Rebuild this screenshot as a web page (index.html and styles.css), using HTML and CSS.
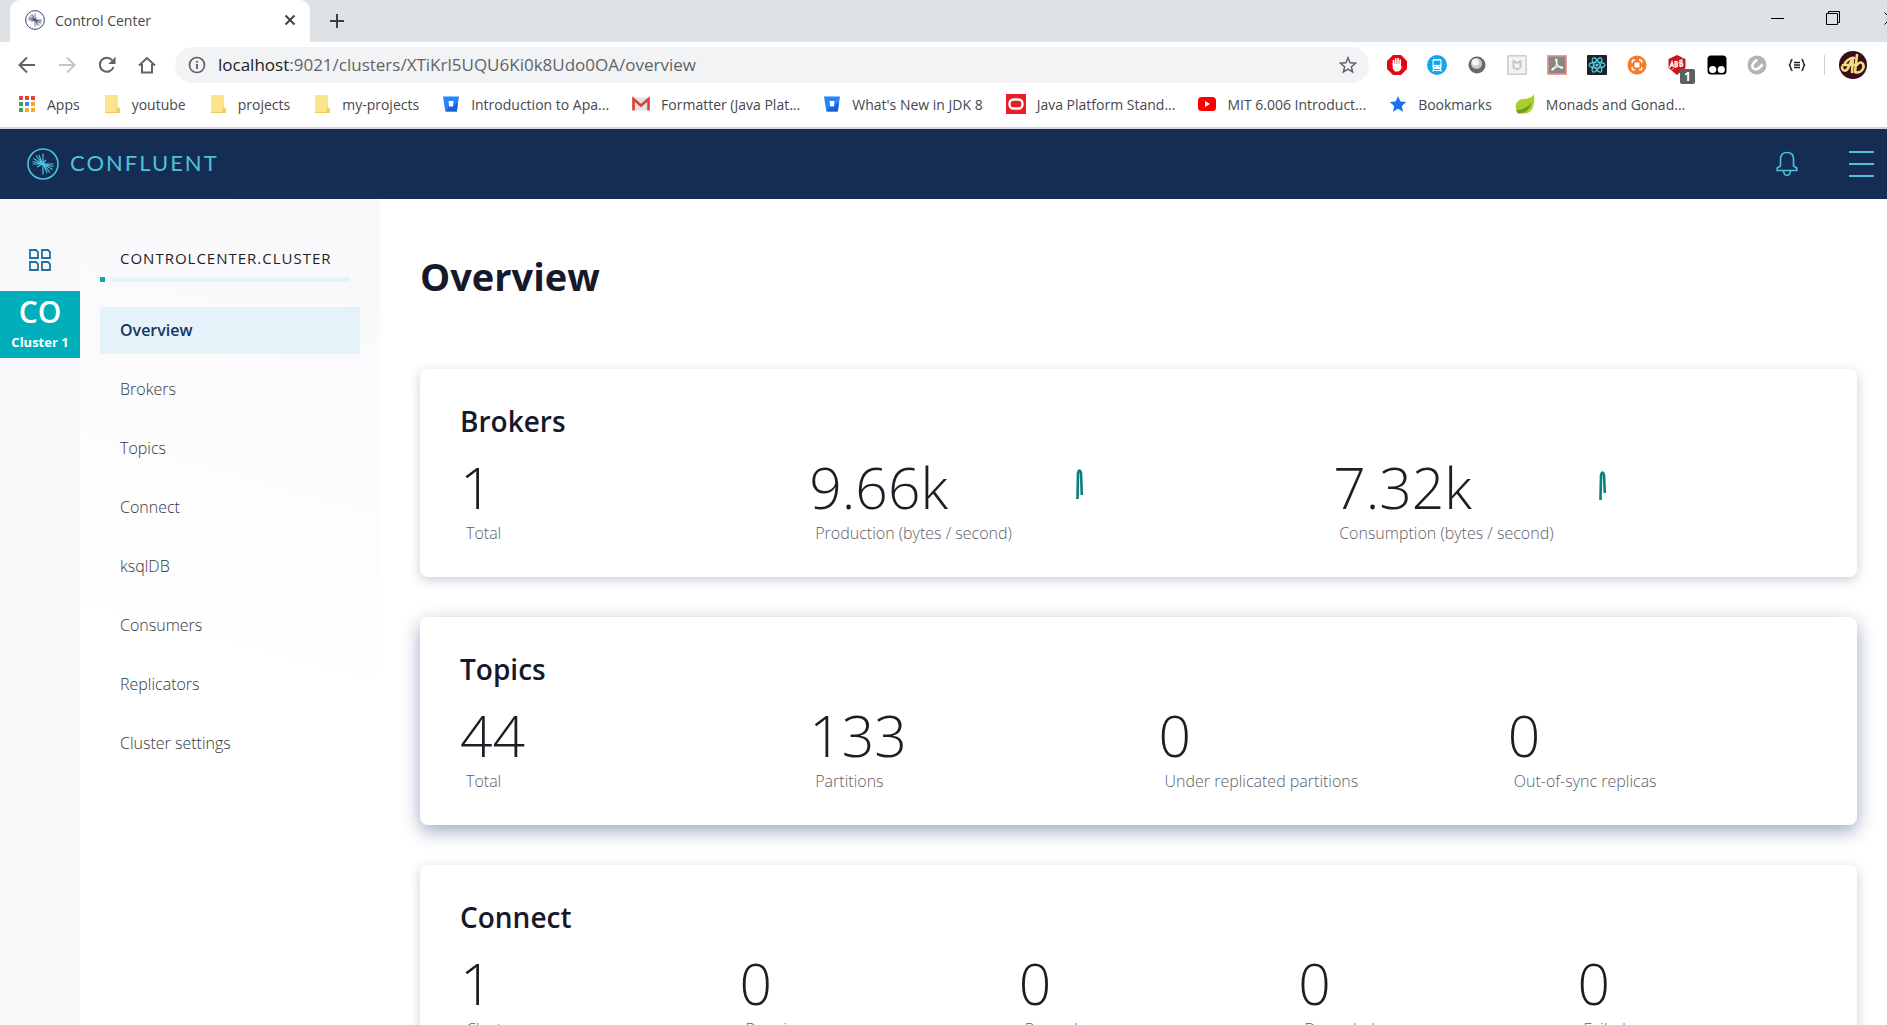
FILE: index.html
```html
<!DOCTYPE html>
<html lang="en">
<head>
<meta charset="utf-8">
<title>Control Center</title>
<link rel="stylesheet" href="styles.css">
</head>
<body>
<svg class="defs" aria-hidden="true">
  <symbol id="burst" viewBox="0 0 32 32">
    <circle cx="16" cy="16" r="15" fill="none" stroke="currentColor" stroke-width="1.6"/>
    <path d="M16 16V5.5M15 15L12 7M14.5 14.5L9 7.5M14 15L6.5 10.5M14 15.5L5.500 13.500M15 16H5.500M16 16V26.500M17 17L20 25M17.500 17.500L23 24.500M18 17L25.500 21.500M18 16.500L26.500 18.500M17 16H26.500M15.500 16L10 19M16 15L19 12" fill="none" stroke="currentColor" stroke-width="1.2"/>
    <path d="M14 13.500L16 14.500L18 15L18 18L16 17.500L14 16.500Z" fill="currentColor"/>
  </symbol>
  <symbol id="folder" viewBox="0 0 18 20">
    <path d="M2 1H15V14L17 15V19H2Z" fill="#fde38c"/>
    <path d="M14 13L17 14V19H13Z" fill="#f6cf57"/>
    <path d="M2 18.500H16" stroke="#efc95a"/>
  </symbol>
  <symbol id="bucket" viewBox="0 0 18 18">
    <path d="M1 1.500H17L14.800 16.500H3.300Z" fill="#2684ff"/>
    <path d="M11 11.500L16 7L14.800 16.500H4L7 11.500Z" fill="#1660d6"/>
    <path d="M6.500 6H11.500L10.800 11.500H7.300Z" fill="#fff"/>
  </symbol>
</svg>

<div class="browser">
  <div class="tabstrip">
    <div class="tab">
      <svg class="tab-icon" width="20" height="20"><use href="#burst"/></svg>
      <span class="tab-title">Control Center</span>
      <button class="icon-btn tab-close" aria-label="Close tab"><svg width="12" height="12" viewBox="0 0 12 12"><path d="M1.500 1.500L10.500 10.500M10.500 1.500L1.500 10.500" stroke="#3c4043" stroke-width="1.900"/></svg></button>
    </div>
    <button class="icon-btn new-tab" aria-label="New tab"><svg width="16" height="16" viewBox="0 0 16 16"><path d="M8 1V15M1 8H15" stroke="#3c4043" stroke-width="2"/></svg></button>
    <div class="window-controls">
      <button class="icon-btn" aria-label="Minimize"><svg width="13" height="13"><path d="M0 6.500H13" stroke="#000"/></svg></button>
      <button class="icon-btn" aria-label="Restore"><svg width="14" height="14" viewBox="0 0 14 14" fill="none" stroke="#000"><path d="M.5 2.500H11.500V13.500H.5ZM2.500 2.500V.5H13.500V11.500H11.500"/></svg></button>
      <button class="icon-btn window-close" aria-label="Close window"><svg width="13" height="13" viewBox="0 0 13 13"><path d="M.5 .5L12.500 12.500M12.500 .5L.5 12.500" stroke="#000"/></svg></button>
    </div>
  </div>

  <div class="toolbar">
    <div class="nav-buttons">
      <button class="icon-btn" aria-label="Back"><svg width="18" height="18" viewBox="0 0 18 18" fill="none" stroke="#5f6368" stroke-width="2"><path d="M17 9H2M9 1.500L1.500 9L9 16.500"/></svg></button>
      <button class="icon-btn" aria-label="Forward"><svg width="18" height="18" viewBox="0 0 18 18" fill="none" stroke="#c4c6c9" stroke-width="2"><path d="M1 9H16M9 1.500L16.500 9L9 16.500"/></svg></button>
      <button class="icon-btn" aria-label="Reload"><svg width="18" height="18" viewBox="0 0 18 18"><path d="M15.500 11A7 7 0 1 1 14 4" fill="none" stroke="#5f6368" stroke-width="2"/><path d="M17.500 .8V8H10.300Z" fill="#5f6368"/></svg></button>
      <button class="icon-btn" aria-label="Home"><svg width="18" height="18" viewBox="0 0 18 18" fill="none" stroke="#5f6368" stroke-width="2"><path d="M1 9.500L9 2L17 9.500M4 8V16.500H14V8"/></svg></button>
    </div>
    <div class="address">
      <svg width="18" height="18" viewBox="0 0 18 18"><circle cx="9" cy="9" r="7.500" fill="none" stroke="#5f6368" stroke-width="1.700"/><path d="M9 8V13M9 5V6.800" stroke="#5f6368" stroke-width="1.900"/></svg>
      <a class="url" href="#"><span class="url-host">localhost</span>:9021/clusters/XTiKrl5UQU6Ki0k8Udo0OA/overview</a>
      <button class="icon-btn star" aria-label="Bookmark this page"><svg width="18" height="18" viewBox="0 0 18 18"><path d="M9 1.800L11.100 6.700L16.500 7.200L12.400 10.800L13.600 16L9 13.200L4.400 16L5.600 10.800L1.500 7.200L6.900 6.700Z" fill="none" stroke="#5f6368" stroke-width="1.500"/></svg></button>
    </div>
    <div class="extensions">
      <button class="icon-btn" aria-label="Ad blocker"><svg width="20" height="20" viewBox="0 0 20 20"><path d="M6 0H14L20 6V14L14 20H6L0 14V6Z" fill="#e30613"/><path d="M6.500 9V5.500M8.700 8V3.800M11 8V3.500M13.200 9V5" stroke="#fff" stroke-width="1.700" stroke-linecap="round"/><path d="M5.700 8.500H14V12L15.500 10.500L13.500 15L11.500 16.500H8L5.700 13.500Z" fill="#fff"/></svg></button>
      <button class="icon-btn" aria-label="Transit"><svg width="20" height="20" viewBox="0 0 20 20"><circle cx="10" cy="10" r="10" fill="#10a7ee"/><rect x="5.500" y="4" width="9" height="10" rx="1.500" fill="#fff"/><path d="M7 6H13V9.500H7ZM7 11.500H8.500M11.500 11.500H13" fill="#10a7ee" stroke="#10a7ee" stroke-width=".8"/><path d="M7 14L5.500 16.500M13 14L14.500 16.500M6.500 15.500H13.500" stroke="#fff" stroke-width="1.200"/></svg></button>
      <button class="icon-btn" aria-label="Orb"><svg width="18" height="18" viewBox="0 0 18 18"><circle cx="9" cy="9" r="8.500" fill="#686868"/><circle cx="8.500" cy="7.500" r="5.500" fill="#c9c9c9"/><circle cx="7.500" cy="6.200" r="3.500" fill="#f7f7f7"/></svg></button>
      <button class="icon-btn" aria-label="Web adviser"><svg width="20" height="20" viewBox="0 0 20 20" fill="none"><rect x=".8" y=".8" width="18.400" height="18.400" rx="1" fill="#f3f3f3" stroke="#c9cbce" stroke-width="1.500"/><path d="M6.500 6L10 8L13.500 6V12.500L10 14.500L6.500 12.500Z" stroke="#c2c4c7" stroke-width="1.800"/></svg></button>
      <button class="icon-btn" aria-label="PDF tools"><svg width="20" height="20" viewBox="0 0 20 20"><rect x=".8" y=".8" width="18.400" height="18.400" fill="#8b8787" stroke="#f19a92" stroke-width="1.500"/><path d="M9 4C10.500 4 10 8 9 10.500C8 13 6 15.500 5 15C4 14 8 12 11 11.700C14 11.500 16 12 15.500 13C14.500 14 11 11.500 9.800 8.500C9 6.500 8.300 4 9 4Z" fill="none" stroke="#fff" stroke-width="1.100"/></svg></button>
      <button class="icon-btn" aria-label="React tools"><svg width="20" height="20" viewBox="0 0 20 20"><rect width="20" height="20" rx="1" fill="#1c232c"/><g fill="none" stroke="#5ccbe8" stroke-width="1.100"><ellipse cx="10" cy="10" rx="8" ry="3"/><ellipse cx="10" cy="10" rx="8" ry="3" transform="rotate(60 10 10)"/><ellipse cx="10" cy="10" rx="8" ry="3" transform="rotate(120 10 10)"/></g><circle cx="10" cy="10" r="1.600" fill="#5ccbe8"/></svg></button>
      <button class="icon-btn" aria-label="Hub"><svg width="20" height="20" viewBox="0 0 20 20"><circle cx="10" cy="10" r="9.500" fill="#f47b2a"/><rect x="7.500" y="7.500" width="5" height="5" fill="#fff"/><path d="M5 8L5.500 5.500L8 5M12 5L14.500 5.500L15 8M15 12L14.500 14.500L12 15M8 15L5.500 14.500L5 12" fill="none" stroke="#fff" stroke-width="1.500"/></svg></button>
      <button class="icon-btn badged" aria-label="Adblock, 1 blocked"><svg width="20" height="20" viewBox="0 0 20 20"><path d="M10 0L18.500 4V13L10 20L1.500 13V4Z" fill="#d0141e"/><path d="M2.500 13L5 7L6.500 12M3.500 10.500H6.500M8 12V6.500C11 5.500 11 9 8 9.200C11.500 9 11.500 12 8 12M13 11.500V5.500C16 5 16 8 13 8.300C17 8 16.500 11 13 11.500" fill="none" stroke="#fff" stroke-width="1.300"/><path d="M4 16L16 3" stroke="#f8c9cc" stroke-width=".8"/></svg><span class="badge">1</span></button>
      <button class="icon-btn" aria-label="Dots"><svg width="20" height="20" viewBox="0 0 20 20"><rect x=".5" y=".5" width="19" height="19" rx="3.500" fill="#000"/><circle cx="5.700" cy="14.500" r="3.600" fill="#fff"/><circle cx="14.300" cy="14.500" r="3.600" fill="#fff"/></svg></button>
      <button class="icon-btn" aria-label="Clip"><svg width="20" height="20" viewBox="0 0 20 20"><circle cx="10" cy="10" r="9.500" fill="#b3b3b3"/><path d="M10 4.500L7 7.500C3 12 8 17 12 13L15.500 9.500" fill="none" stroke="#fff" stroke-width="2.600"/></svg></button>
      <button class="icon-btn" aria-label="JSON viewer"><svg width="18" height="14" viewBox="0 0 18 14" fill="none" stroke="#222" stroke-width="1.500"><path d="M4.500 1.500C2 1.500 3.500 6.500 1 7C3.500 7.500 2 12.500 4.500 12.500M13.500 1.500C16 1.500 14.500 6.500 17 7C14.500 7.500 16 12.500 13.500 12.500M6 4.500H12M6 7H12M6 9.500H12"/></svg></button>
    </div>
    <span class="separator"></span>
    <button class="icon-btn avatar" aria-label="Profile"><svg width="28" height="28" viewBox="0 0 28 28"><circle cx="14" cy="14" r="14" fill="#3a0d1c"/><path d="M3 16C3 21 8 21 10 15L14 6L13 21M4 14H15M6 12C8 9 12 7 15 7M18 4L16 21C22 23 26 17 24 13C22 10 19 12 18 14" fill="none" stroke="#f1dc7c" stroke-width="2.600" stroke-linecap="round"/></svg></button>
  </div>

  <nav class="bookmarks" aria-label="Bookmarks">
    <a href="#"><svg width="18" height="18" viewBox="0 0 18 18"><path d="M1 1H5V5H1ZM7 1H11V5H7ZM13 1H17V5H13Z" fill="#ea4335"/><path d="M1 7H5V11H1ZM1 13H5V17H1Z" fill="#34a853"/><path d="M7 7H11V11H7Z" fill="#4285f4"/><path d="M13 7H17V11H13ZM7 13H11V17H7ZM13 13H17V17H13Z" fill="#f7ab1e"/></svg>Apps</a>
    <a href="#"><svg width="18" height="20"><use href="#folder"/></svg>youtube</a>
    <a href="#"><svg width="18" height="20"><use href="#folder"/></svg>projects</a>
    <a href="#"><svg width="18" height="20"><use href="#folder"/></svg>my-projects</a>
    <a href="#"><svg width="18" height="18"><use href="#bucket"/></svg>Introduction to Apa...</a>
    <a href="#"><svg width="18" height="18" viewBox="0 0 18 18"><rect x="1" y="2.500" width="16" height="13" fill="#e3e3e3"/><path d="M1.500 15.500V4L9 10.500L16.500 4V15.500" fill="none" stroke="#d5423a" stroke-width="2.600"/></svg>Formatter (Java Plat...</a>
    <a href="#"><svg width="18" height="18"><use href="#bucket"/></svg>What's New in JDK 8</a>
    <a href="#"><svg width="20" height="20" viewBox="0 0 20 20"><rect width="20" height="20" fill="#e8202a"/><rect x="3.500" y="5.500" width="13" height="9" rx="4" fill="none" stroke="#fff" stroke-width="2.300"/></svg>Java Platform Stand...</a>
    <a href="#"><svg width="18" height="18" viewBox="0 0 18 18"><rect y="2" width="18" height="14" rx="3.500" fill="#f00"/><path d="M7 6L12 9L7 12Z" fill="#fff"/></svg>MIT 6.006 Introduct...</a>
    <a href="#"><svg width="18" height="18" viewBox="0 0 18 18"><path d="M9 1L11.400 6.400L17.200 7L12.800 10.900L14.100 16.700L9 13.700L3.900 16.700L5.200 10.900L.8 7L6.600 6.400Z" fill="#1a73e8"/></svg>Bookmarks</a>
    <a href="#"><svg width="20" height="20" viewBox="0 0 20 20"><path d="M19 0C20 8 19 20 8 19.500L3 19C-1 14 0 6 8 5C13 4.500 17 4 19 0Z" fill="#a9d02a"/><path d="M1 16C8 16 13 13 17 8C15 16 9 20 3 19.500Z" fill="#6f9d1c"/></svg>Monads and Gonad...</a>
  </nav>
</div>

<header class="app-header">
  <a class="brand" href="#"><svg width="32" height="32"><use href="#burst"/></svg><span>CONFLUENT</span></a>
  <button class="icon-btn" aria-label="Notifications"><svg width="22" height="26" viewBox="0 0 22 26" fill="none" stroke="#4bc3dc" stroke-width="1.600"><path d="M4.500 15V8C4.500 3.500 7 1.500 11 1.500S17.500 3.500 17.500 8V15L20.800 17V19.500H1.200V17ZM7.500 20C8 23.500 9.500 24.500 11 24.500S14 23.500 14.500 20"/></svg></button>
  <button class="icon-btn" aria-label="Menu"><svg width="25" height="26" viewBox="0 0 25 26" stroke="#4bc3dc" stroke-width="2"><path d="M0 1H25M0 13H25M0 25H25"/></svg></button>
</header>

<div class="app">
  <aside class="rail">
    <a class="rail-home" href="#" aria-label="All clusters"><svg width="22" height="22" viewBox="0 0 22 22" fill="none" stroke="#20719c" stroke-width="1.800"><path d="M1 1H7L9 3V9H1ZM13 1H19L21 3V9H13ZM1 13H7L9 15V21H1ZM13 13H19L21 15V21H13Z"/></svg></a>
    <a class="rail-cluster" href="#"><span class="rail-code">CO</span><span class="rail-name">Cluster 1</span></a>
  </aside>

  <aside class="sidebar">
    <div class="cluster-title">CONTROLCENTER.CLUSTER</div>
    <div class="cluster-bar"><span class="bar-dot"></span><span class="bar-line"></span></div>
    <nav class="menu" aria-label="Cluster">
      <a class="active" href="#">Overview</a>
      <a href="#">Brokers</a>
      <a href="#">Topics</a>
      <a href="#">Connect</a>
      <a href="#">ksqlDB</a>
      <a href="#">Consumers</a>
      <a href="#">Replicators</a>
      <a href="#">Cluster settings</a>
    </nav>
  </aside>

  <main class="content">
    <h1>Overview</h1>
    <section class="card">
      <h2>Brokers</h2>
      <div class="metrics metrics-brokers">
        <div class="metric"><div class="value">1</div><div class="label">Total</div></div>
        <div class="metric with-chart">
          <div><div class="value">9.66k</div><div class="label">Production (bytes / second)</div></div>
          <svg width="10" height="60" viewBox="0 0 10 60"><path d="M2.500 45L3 19Q4.500 14 6 19L6.800 41" fill="none" stroke="#08807f" stroke-width="2.600"/></svg>
        </div>
        <div class="metric with-chart">
          <div><div class="value">7.32k</div><div class="label">Consumption (bytes / second)</div></div>
          <svg width="10" height="60" viewBox="0 0 10 60"><path d="M1.500 46L2 21Q3.500 16 5 21L5.800 39" fill="none" stroke="#08807f" stroke-width="2.600"/></svg>
        </div>
      </div>
    </section>
    <section class="card hovered">
      <h2>Topics</h2>
      <div class="metrics">
        <div class="metric"><div class="value">44</div><div class="label">Total</div></div>
        <div class="metric"><div class="value">133</div><div class="label">Partitions</div></div>
        <div class="metric"><div class="value">0</div><div class="label">Under replicated partitions</div></div>
        <div class="metric"><div class="value">0</div><div class="label">Out-of-sync replicas</div></div>
      </div>
    </section>
    <section class="card">
      <h2>Connect</h2>
      <div class="metrics">
        <div class="metric"><div class="value">1</div><div class="label">Clusters</div></div>
        <div class="metric"><div class="value">0</div><div class="label">Running</div></div>
        <div class="metric"><div class="value">0</div><div class="label">Paused</div></div>
        <div class="metric"><div class="value">0</div><div class="label">Degraded</div></div>
        <div class="metric"><div class="value">0</div><div class="label">Failed</div></div>
      </div>
    </section>
  </main>
</div>
</body>
</html>
```
FILE: styles.css
```css
* { box-sizing: border-box; }

body {
  margin: 0;
  height: 100vh;
  overflow: hidden;
  display: flex;
  flex-direction: column;
  background: #fff;
  color: #1c1e26;
  font-family: "Open Sans", "Noto Sans", sans-serif;
  font-size: 16px;
}

a { color: inherit; text-decoration: none; }
svg { display: block; flex: none; }
.defs { position: absolute; width: 0; height: 0; }

.icon-btn {
  display: flex;
  align-items: center;
  justify-content: center;
  padding: 0;
  border: 0;
  background: none;
  font: inherit;
}

/* Browser frame */
.browser { flex: none; border-bottom: 2px solid #cfd6de; }

.tabstrip {
  display: flex;
  align-items: stretch;
  height: 42px;
  padding-left: 10px;
  background: #dee1e6;
  overflow: hidden;
}
.tab {
  display: flex;
  align-items: center;
  width: 300px;
  padding: 0 14px 2px 15px;
  border-radius: 10px 10px 0 0;
  background: #fff;
  color: #45494d;
}
.tab-icon { color: #3b4566; }
.tab-title { flex: 1; padding-left: 10px; font-size: 14px; }
.new-tab { width: 54px; }
.window-controls { display: flex; margin-left: auto; padding-bottom: 6px; }
.window-controls .icon-btn { width: 56px; }
.window-controls .window-close { width: 26px; justify-content: flex-start; padding-left: 23px; }

.toolbar {
  display: flex;
  align-items: center;
  height: 45px;
  padding: 0 20px 0 7px;
}
.nav-buttons, .extensions { display: flex; }
.nav-buttons .icon-btn, .extensions .icon-btn { width: 40px; height: 36px; }
.address {
  flex: 1;
  display: flex;
  align-items: center;
  gap: 12px;
  height: 36px;
  margin: 0 8px;
  padding: 0 12px 0 13px;
  border-radius: 18px;
  background: #f1f3f4;
}
.url { flex: 1; font-size: 17px; color: #5f6368; }
.url-host { color: #202124; }
.badged { position: relative; }
.badge {
  position: absolute;
  right: 2px;
  bottom: -1px;
  width: 15px;
  height: 15px;
  border-radius: 2px;
  background: #5c5f62;
  color: #fff;
  font-size: 12px;
  font-weight: 700;
  line-height: 15px;
}
.separator { width: 1px; height: 20px; margin: 0 14px 0 7px; background: #cfd1d4; }

.bookmarks {
  display: flex;
  align-items: center;
  gap: 23px;
  height: 40px;
  padding: 0 18px 6px;
  color: #45494d;
  font-size: 14px;
  white-space: nowrap;
}
.bookmarks a { display: flex; align-items: center; gap: 11px; }

/* Application header */
.app-header {
  flex: none;
  display: flex;
  align-items: center;
  gap: 51px;
  height: 70px;
  padding: 0 13px 0 27px;
  background: #152c53;
  color: #4bc3dc;
}
.brand { display: flex; align-items: center; gap: 11px; margin-right: auto; }
.brand span { font-family: Lato, sans-serif; font-size: 22px; line-height: 24px; padding-bottom: 2px; letter-spacing: 2px; }

.app { flex: 1; min-height: 0; display: flex; }

/* Cluster rail */
.rail { flex: none; width: 80px; background: #f8f8fb; }
.rail-home { display: flex; justify-content: center; padding: 50px 0 20px; }
.rail-cluster {
  display: flex;
  flex-direction: column;
  align-items: center;
  height: 67px;
  background: #00afba;
  color: #fff;
}
.rail-code { font-size: 30px; font-weight: 600; line-height: 42px; }
.rail-name { font-size: 13px; font-weight: 700; line-height: 18px; }

/* Sidebar */
.sidebar {
  flex: none;
  width: 300px;
  padding: 48px 20px 0;
  background: linear-gradient(195deg, #f8f8fb 0%, #fff 55%);
}
.cluster-title { padding-left: 20px; font-size: 15px; line-height: 22px; letter-spacing: 1px; color: #1c1e26; }
.cluster-bar { display: flex; gap: 5px; padding: 8px 10px 25px 0; }
.bar-dot { width: 5px; height: 5px; background: #13a5a5; }
.bar-line { flex: 1; height: 5px; background: #e6f3fa; }
.menu { display: flex; flex-direction: column; gap: 12px; font-weight: 300; }
.menu a { padding: 0 20px; line-height: 47px; color: #33363d; }
.menu .active { background: #e4f3fa; color: #173361; font-weight: 600; }

/* Overview */
.content {
  flex: 1;
  min-width: 0;
  display: flex;
  flex-direction: column;
  gap: 40px;
  padding: 50px 30px 0 40px;
  overflow: hidden;
}
h1 { margin: 0 0 26px; font-size: 38px; line-height: 54px; color: #16192a; }
.card {
  flex: none;
  padding: 32px 0 32px 40px;
  border-radius: 8px;
  background: #fff;
  box-shadow: 0 3px 12px rgba(40, 45, 100, .24);
}
.card.hovered { box-shadow: 0 6px 18px rgba(25, 45, 110, .42); }
h2 { margin: 0; font-size: 28px; font-weight: 600; line-height: 40px; color: #16192a; }
.metrics { display: grid; grid-auto-flow: column; grid-auto-columns: minmax(0, 1fr); }
.metrics-brokers { grid-template-columns: 2fr 3fr 3fr; }
.value { padding-top: 12px; font-size: 57px; font-weight: 300; line-height: 68px; }
.label { padding-left: 6px; font-size: 16px; font-weight: 300; line-height: 24px; color: #5d6068; white-space: nowrap; }
.with-chart { display: grid; grid-template-columns: 1fr 1fr; }
.with-chart svg { margin: 13px 0 0 4px; }
```
